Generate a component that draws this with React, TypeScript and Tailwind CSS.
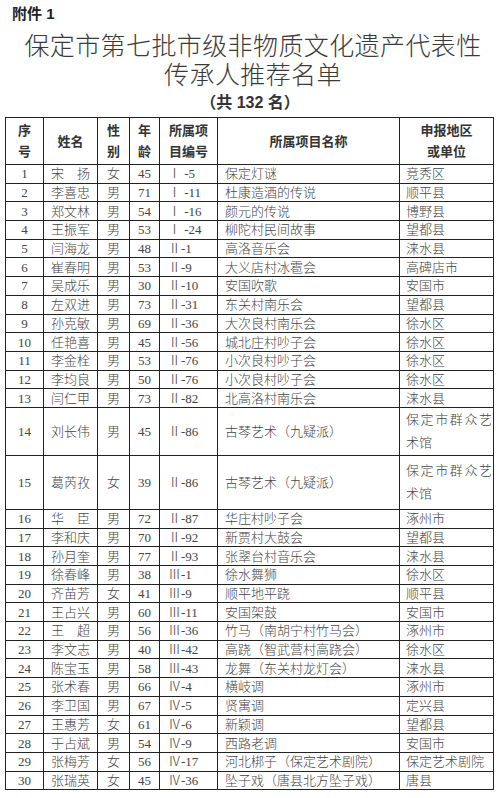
import React from "react";

type Row = {
  no: number;
  name: string;
  sex: string;
  age: number;
  code: string;
  project: string;
  region: string;
};

const rows: Row[] = [
  { no: 1, name: "宋　扬", sex: "女", age: 45, code: "Ⅰ -5", project: "保定灯谜", region: "竞秀区" },
  { no: 2, name: "李喜忠", sex: "男", age: 71, code: "Ⅰ -11", project: "杜康造酒的传说", region: "顺平县" },
  { no: 3, name: "郑文林", sex: "男", age: 54, code: "Ⅰ -16", project: "颜元的传说", region: "博野县" },
  { no: 4, name: "王振军", sex: "男", age: 53, code: "Ⅰ -24", project: "柳陀村民间故事", region: "望都县" },
  { no: 5, name: "闫海龙", sex: "男", age: 48, code: "Ⅱ-1", project: "高洛音乐会", region: "涞水县" },
  { no: 6, name: "崔春明", sex: "男", age: 53, code: "Ⅱ-9", project: "大义店村冰雹会", region: "高碑店市" },
  { no: 7, name: "吴成乐", sex: "男", age: 30, code: "Ⅱ-10", project: "安国吹歌", region: "安国市" },
  { no: 8, name: "左双进", sex: "男", age: 73, code: "Ⅱ-31", project: "东关村南乐会", region: "望都县" },
  { no: 9, name: "孙克敏", sex: "男", age: 69, code: "Ⅱ-36", project: "大次良村南乐会", region: "徐水区" },
  { no: 10, name: "任艳喜", sex: "男", age: 45, code: "Ⅱ-56", project: "城北庄村吵子会", region: "徐水区" },
  { no: 11, name: "李金栓", sex: "男", age: 53, code: "Ⅱ-76", project: "小次良村吵子会", region: "徐水区" },
  { no: 12, name: "李均良", sex: "男", age: 50, code: "Ⅱ-76", project: "小次良村吵子会", region: "徐水区" },
  { no: 13, name: "闫仁甲", sex: "男", age: 73, code: "Ⅱ-82", project: "北高洛村南乐会", region: "涞水县" },
  { no: 14, name: "刘长伟", sex: "男", age: 45, code: "Ⅱ-86", project: "古琴艺术（九疑派）", region: "保定市群众艺术馆" },
  { no: 15, name: "葛芮孜", sex: "女", age: 39, code: "Ⅱ-86", project: "古琴艺术（九疑派）", region: "保定市群众艺术馆" },
  { no: 16, name: "华　臣", sex: "男", age: 72, code: "Ⅱ-87", project: "华庄村吵子会", region: "涿州市" },
  { no: 17, name: "李和庆", sex: "男", age: 70, code: "Ⅱ-92", project: "新贾村大鼓会", region: "望都县" },
  { no: 18, name: "孙月奎", sex: "男", age: 77, code: "Ⅱ-93", project: "张翠台村音乐会", region: "涞水县" },
  { no: 19, name: "徐春峰", sex: "男", age: 38, code: "Ⅲ-1", project: "徐水舞狮", region: "徐水区" },
  { no: 20, name: "齐苗芳", sex: "女", age: 41, code: "Ⅲ-9", project: "顺平地平跷", region: "顺平县" },
  { no: 21, name: "王占兴", sex: "男", age: 60, code: "Ⅲ-11", project: "安国架鼓", region: "安国市" },
  { no: 22, name: "王　超", sex: "男", age: 56, code: "Ⅲ-36", project: "竹马（南胡宁村竹马会）", region: "涿州市" },
  { no: 23, name: "李文志", sex: "男", age: 40, code: "Ⅲ-42", project: "高跷（智武营村高跷会）", region: "徐水区" },
  { no: 24, name: "陈宝玉", sex: "男", age: 58, code: "Ⅲ-43", project: "龙舞（东关村龙灯会）", region: "涞水县" },
  { no: 25, name: "张术春", sex: "男", age: 66, code: "Ⅳ-4", project: "横岐调", region: "涿州市" },
  { no: 26, name: "李卫国", sex: "男", age: 67, code: "Ⅳ-5", project: "贤寓调", region: "定兴县" },
  { no: 27, name: "王惠芳", sex: "女", age: 61, code: "Ⅳ-6", project: "新颖调", region: "望都县" },
  { no: 28, name: "于占斌", sex: "男", age: 54, code: "Ⅳ-9", project: "西路老调", region: "安国市" },
  { no: 29, name: "张梅芳", sex: "女", age: 56, code: "Ⅳ-17", project: "河北梆子（保定艺术剧院）", region: "保定艺术剧院" },
  { no: 30, name: "张瑞英", sex: "女", age: 45, code: "Ⅳ-36", project: "坠子戏（唐县北方坠子戏）", region: "唐县" },
];

const sans = "font-['Liberation_Sans','Noto_Sans_CJK_SC',sans-serif]";
const body = "font-['Liberation_Serif','Noto_Sans_CJK_SC',serif]";
const cell = "border border-[#222] p-0";

export default function App() {
  return (
    <div className="w-[500px] h-[798px] bg-white overflow-hidden text-[#2e2e2e]">
      <p className={`${sans} font-bold text-[15px] leading-5 pl-3 pt-[4px] text-[#222]`}>附件 1</p>

      {/* 标题 */}
      <div className={`${sans} font-light text-center text-[25px] leading-[29px] tracking-[0.4px] mt-[8px] pl-[6px] text-[#3a3a3a]`}>
        <p>保定市第七批市级非物质文化遗产代表性</p>
        <p>传承人推荐名单</p>
      </div>
      <p className={`${sans} font-bold text-center text-[16px] leading-5 mt-[3px] text-[#333]`}>（共 132 名）</p>

      {/* 名单表格 */}
      <table className="ml-[5px] mt-[4px] w-[488px] table-fixed border-collapse">
        <colgroup>
          <col className="w-[38px]" />
          <col className="w-[54px]" />
          <col className="w-[32px]" />
          <col className="w-[30px]" />
          <col className="w-[58px]" />
          <col className="w-[182px]" />
          <col className="w-[94px]" />
        </colgroup>
        <thead>
          <tr className={`${sans} font-bold text-[13px] leading-[21px] text-[#333]`}>
            <th className={`${cell} h-[47px] font-bold`}>序<br />号</th>
            <th className={`${cell} font-bold`}>姓名</th>
            <th className={`${cell} font-bold`}>性<br />别</th>
            <th className={`${cell} font-bold`}>年<br />龄</th>
            <th className={`${cell} font-bold`}>所属项<br />目编号</th>
            <th className={`${cell} font-bold`}>所属项目名称</th>
            <th className={`${cell} font-bold`}>申报地区<br />或单位</th>
          </tr>
        </thead>
        <tbody className={`${body} font-light text-[13px] text-[#444]`}>
          {rows.map((r) => {
            const tall = r.no === 14 || r.no === 15;
            const h = r.no === 14 ? "h-[48px]" : r.no === 15 ? "h-[54px]" : "h-[18.7px]";
            return (
              <tr key={r.no} className="leading-[17px]">
                <td className={`${cell} ${h} text-center`}>{r.no}</td>
                <td className={`${cell} text-center`}>{r.name}</td>
                <td className={`${cell} text-center`}>{r.sex}</td>
                <td className={`${cell} text-center`}>{r.age}</td>
                <td className={`${cell} pl-[8px] whitespace-nowrap`}>{r.code}</td>
                <td className={`${cell} pl-[7px] whitespace-nowrap`}>{r.project}</td>
                <td className={`${cell} pl-[6px] whitespace-nowrap`}>
                  {tall ? (
                    <span className="block leading-[23px]">
                      <span className="block tracking-[1.6px]">保定市群众艺</span>
                      <span className="block">术馆</span>
                    </span>
                  ) : (
                    r.region
                  )}
                </td>
              </tr>
            );
          })}
        </tbody>
      </table>
    </div>
  );
}
